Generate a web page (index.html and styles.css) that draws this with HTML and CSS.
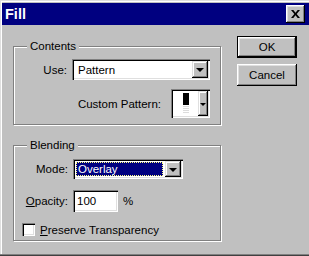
FILE: index.html
```html
<!DOCTYPE html>
<html lang="en">
<head>
    <meta charset="UTF-8">
    <title>Fill</title>
    <link rel="stylesheet" href="styles.css">
</head>
<body>
    <div class="window">
        <div class="titlebar">
            <span class="title">Fill</span>
            <button class="btn close-btn" aria-label="Close">
                <svg width="9" height="8" viewBox="0 0 9 8">
                    <path d="M0 0h2.3l2.2 2.7L6.7 0H9L5.7 4 9 8H6.7L4.5 5.3 2.3 8H0l3.3-4z" fill="#000"/>
                </svg>
            </button>
        </div>

        <div class="dialog-body">
            <div class="groups">
                <div class="group contents">
                    <span class="group-title">Contents</span>
                    <div class="row">
                        <label>Use:</label>
                        <div class="combo use-combo">
                            <span class="combo-text">Pattern</span>
                            <span class="combo-arrow"></span>
                        </div>
                    </div>
                    <div class="row pattern-row">
                        <label>Custom Pattern:</label>
                        <div class="pattern-picker">
                            <div class="swatch-area">
                                <div class="swatch">
                                    <span class="swatch-dark"></span>
                                    <span class="swatch-light"></span>
                                </div>
                            </div>
                            <span class="combo-arrow small"></span>
                        </div>
                    </div>
                </div>

                <div class="group blending">
                    <span class="group-title">Blending</span>
                    <div class="form-grid">
                        <label class="field-label">Mode:</label>
                        <div class="combo mode-combo">
                            <span class="combo-text selected">Overlay</span>
                            <span class="combo-arrow"></span>
                        </div>

                        <label class="field-label"><u>O</u>pacity:</label>
                        <div class="opacity-field">
                            <span class="text-input">100</span>
                            <span class="unit">%</span>
                        </div>
                    </div>
                    <div class="check-row">
                        <span class="checkbox"></span>
                        <span><u>P</u>reserve Transparency</span>
                    </div>
                </div>
            </div>

            <div class="actions">
                <button class="btn push default">OK</button>
                <button class="btn push">Cancel</button>
            </div>
        </div>
    </div>
</body>
</html>
```

FILE: styles.css
```css
* {
    margin: 0;
    padding: 0;
    box-sizing: border-box;
}

body {
    font-family: "Liberation Sans", Arial, sans-serif;
    font-size: 11.5px;
    color: #000;
    background: #c0c0c0;
}

.window {
    width: 309px;
    height: 256px;
    padding: 3px 0 0 2px;
    background: #c0c0c0;
    box-shadow: inset 0 -1px #404040, inset 0 -2px #808080,
                inset 1px 1px #dfdfdf, inset 2px 2px #fff;
}

/* title bar */
.titlebar {
    height: 22px;
    background: #000080;
    display: flex;
    align-items: center;
    justify-content: space-between;
    padding: 0 4px 0 3px;
}

.title {
    color: #fff;
    font-weight: bold;
    font-size: 14.5px;
}

.btn {
    font: inherit;
    color: #000;
    background: #c0c0c0;
    border: none;
    box-shadow: inset -1px -1px #000, inset 1px 1px #fff,
                inset -2px -2px #808080, inset 2px 2px #dfdfdf;
}

.close-btn {
    width: 19px;
    height: 18px;
    display: flex;
    align-items: center;
    justify-content: center;
    padding-bottom: 1px;
}

/* layout */
.dialog-body {
    display: flex;
    padding: 0 0 0 11px;
}

.groups {
    width: 208px;
    padding-top: 21px;
}

.group {
    position: relative;
    border: 1px solid #808080;
    box-shadow: 1px 1px 0 #fff, inset 1px 1px 0 #fff;
}

.group-title {
    position: absolute;
    top: -8px;
    left: 13px;
    padding: 0 3px;
    background: #c0c0c0;
    line-height: 14px;
}

.contents {
    height: 79px;
    padding: 12px 10px 0 0;
}

.blending {
    height: 96px;
    margin-top: 20px;
    padding: 13px 0 0 0;
}

.row {
    display: flex;
    justify-content: flex-end;
    align-items: center;
    gap: 5px;
}

.pattern-row {
    margin-top: 9px;
    gap: 10px;
}

/* sunken fields */
.combo,
.pattern-picker,
.text-input,
.checkbox {
    background: #fff;
    box-shadow: inset 1px 1px #808080, inset 2px 2px #000,
                inset -1px -1px #fff, inset -2px -2px #dfdfdf;
}

.combo {
    display: flex;
    padding: 2px;
}

.use-combo {
    width: 138px;
    height: 21px;
}

.mode-combo {
    width: 110px;
    height: 20px;
}

.combo-text {
    flex: 1;
    display: flex;
    align-items: center;
    padding-left: 4px;
}

.combo-text.selected {
    margin: 1px 2px 1px 1px;
    padding-left: 2px;
    background: #000080;
    color: #fff;
    outline: 1px dotted #ffff80;
    outline-offset: -1px;
}

.combo-arrow {
    width: 16px;
    display: flex;
    align-items: center;
    justify-content: center;
    background: #c0c0c0;
    box-shadow: inset -1px -1px #000, inset 1px 1px #dfdfdf,
                inset -2px -2px #808080, inset 2px 2px #fff;
}

.combo-arrow::after {
    content: '';
    border-top: 4px solid #000;
    border-left: 4px solid transparent;
    border-right: 4px solid transparent;
    margin-top: 1px;
}

.combo-arrow.small {
    width: 10px;
}

.combo-arrow.small::after {
    border-top-width: 3px;
    border-left-width: 3px;
    border-right-width: 3px;
}

/* pattern picker */
.pattern-picker {
    width: 39px;
    height: 29px;
    display: flex;
    padding: 2px;
}

.swatch-area {
    flex: 1;
    display: flex;
    justify-content: center;
    align-items: center;
}

.swatch {
    display: flex;
    flex-direction: column;
    width: 6px;
}

.swatch-dark {
    height: 12px;
    background: #000;
}

.swatch-light {
    height: 9px;
    background: repeating-linear-gradient(0deg, #fff 0 1px, #dcdcdc 1px 2px);
}

/* blending form */
.form-grid {
    display: grid;
    grid-template-columns: 54px auto;
    column-gap: 5px;
    row-gap: 11px;
    align-items: center;
}

.field-label {
    text-align: right;
}

.opacity-field {
    display: flex;
    align-items: center;
    gap: 5px;
}

.text-input {
    width: 45px;
    height: 22px;
    display: flex;
    align-items: center;
    padding-left: 4px;
}

.check-row {
    display: flex;
    align-items: center;
    gap: 5px;
    margin: 11px 0 0 8px;
}

.checkbox {
    width: 13px;
    height: 13px;
}

/* buttons */
.actions {
    display: flex;
    flex-direction: column;
    gap: 6px;
    margin: 11px 0 0 16px;
}

.push {
    width: 60px;
    height: 22px;
}

.push.default {
    box-shadow: inset 0 0 0 1px #000, inset -2px -2px #000, inset 2px 2px #fff,
                inset -3px -3px #808080, inset 3px 3px #dfdfdf;
}
```
